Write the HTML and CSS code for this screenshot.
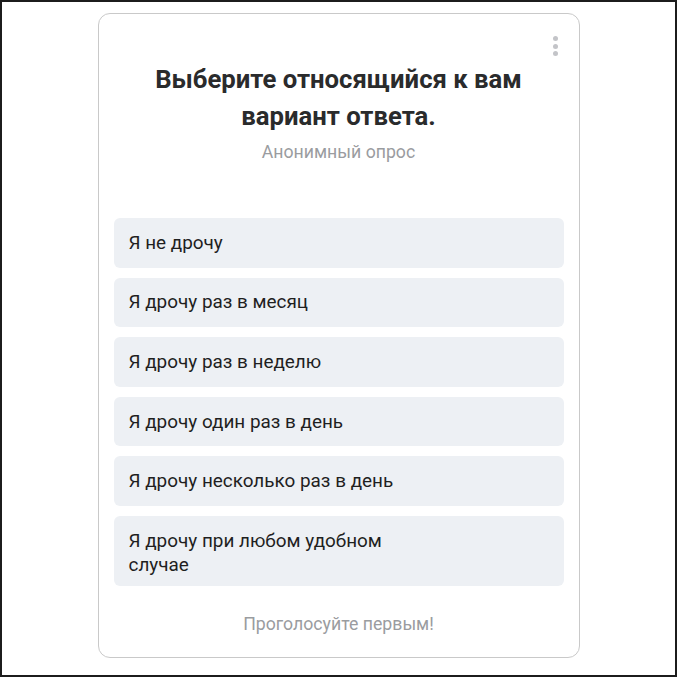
FILE: index.html
```html
<!DOCTYPE html>
<html lang="ru">
<head>
<meta charset="utf-8">
<link rel="stylesheet" href="styles.css">
</head>
<body>
<div class="frame">
  <div class="card">
    <div class="menu"><span></span><span></span><span></span></div>
    <h1 class="title">Выберите относящийся к вам<br>вариант ответа.</h1>
    <div class="subtitle">Анонимный опрос</div>
    <div class="options">
      <div class="option">Я не дрочу</div>
      <div class="option">Я дрочу раз в месяц</div>
      <div class="option">Я дрочу раз в неделю</div>
      <div class="option">Я дрочу один раз в день</div>
      <div class="option">Я дрочу несколько раз в день</div>
      <div class="option two">Я дрочу при любом удобном<br>случае</div>
    </div>
    <div class="footer">Проголосуйте первым!</div>
  </div>
</div>
</body>
</html>
```
FILE: styles.css
```css
html, body {
  margin: 0;
  padding: 0;
  background: #fff;
}
body {
  font-family: Roboto, "Liberation Sans", Arial, sans-serif;
}
.frame {
  box-sizing: border-box;
  width: 677px;
  height: 677px;
  border: 2px solid #1c1c1c;
  padding-top: 11px;
  display: flex;
  justify-content: center;
  align-items: flex-start;
}
.card {
  position: relative;
  box-sizing: border-box;
  width: 482px;
  height: 645px;
  border: 1px solid #c9c9c9;
  border-radius: 12px;
  padding: 0 15px;
  display: flex;
  flex-direction: column;
  align-items: stretch;
}
.menu {
  position: absolute;
  top: 22px;
  right: 21px;
  display: flex;
  flex-direction: column;
  gap: 2.5px;
}
.menu span {
  width: 5px;
  height: 5px;
  border-radius: 50%;
  background: #c3c4c8;
}
.title {
  margin: 47px 0 0;
  font-size: 25.7px;
  font-weight: 700;
  line-height: 37px;
  text-align: center;
  color: #2a2b2c;
}
.subtitle {
  margin-top: 7px;
  text-align: center;
  font-size: 17.7px;
  line-height: 20px;
  color: #9a9ca0;
}
.options {
  margin-top: 56px;
  display: flex;
  flex-direction: column;
  gap: 10px;
}
.option {
  box-sizing: border-box;
  min-height: 49.6px;
  padding: 11px 15px;
  background: #edf0f4;
  border-radius: 6px;
  font-size: 18.9px;
  line-height: 24px;
  color: #1f1f1f;
  display: flex;
  align-items: center;
}
.option.two {
  min-height: 70px;
  padding: 13px 15px 8px;
}
.footer {
  margin-top: 28px;
  text-align: center;
  font-size: 17.7px;
  line-height: 20px;
  color: #9a9ca0;
}
```
